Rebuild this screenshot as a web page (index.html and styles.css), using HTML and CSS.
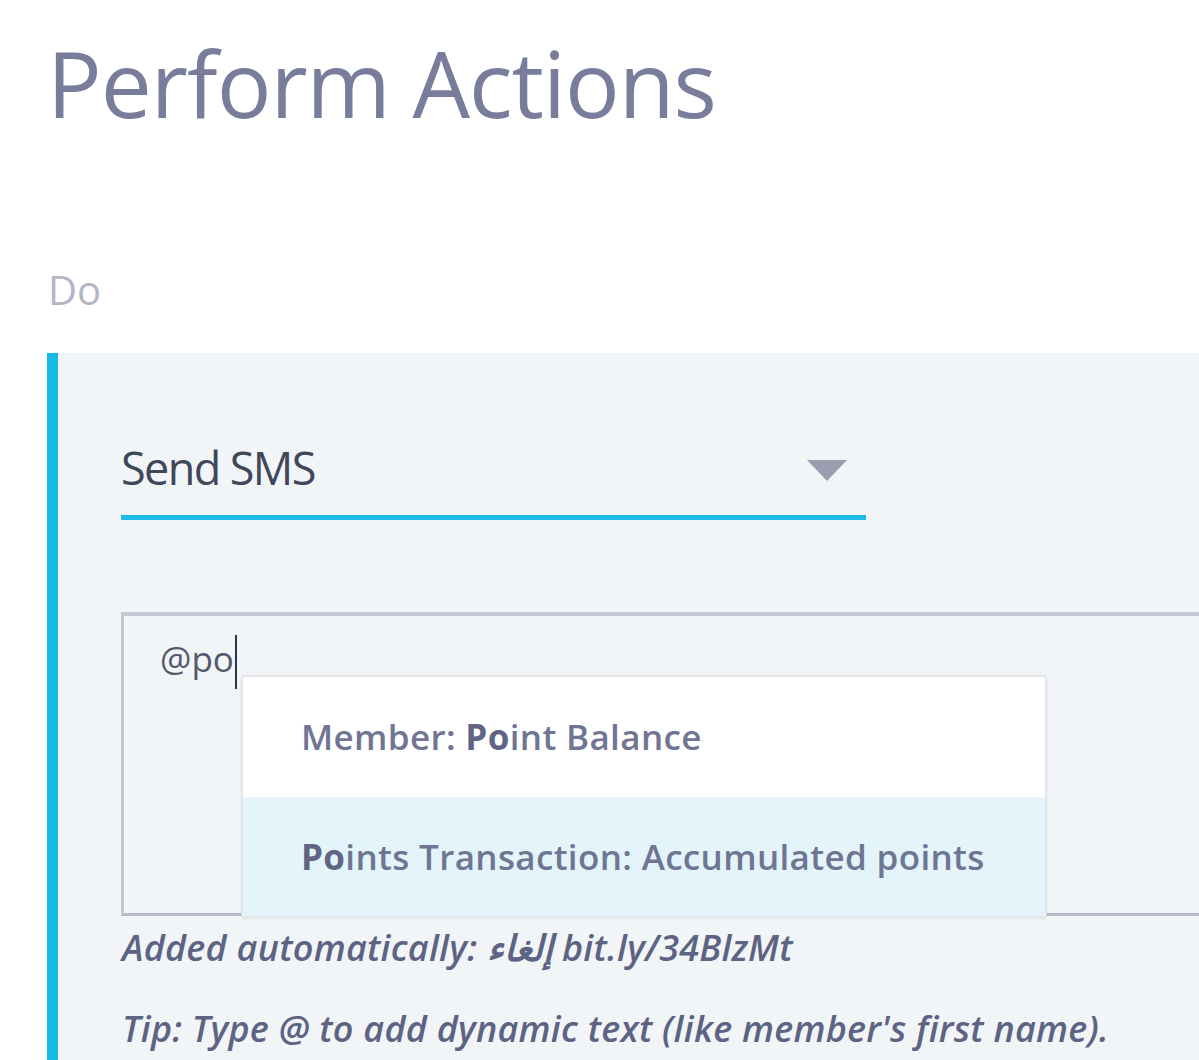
FILE: index.html
```html
<!DOCTYPE html>
<html lang="en">
<head>
<meta charset="utf-8">
<title>Perform Actions</title>
<link rel="stylesheet" href="styles.css">
</head>
<body>
<div class="page">
  <h1 class="title">Perform Actions</h1>
  <div class="label">Do</div>
  <section class="panel">
    <div class="select">
      <span class="select-value">Send SMS</span>
      <span class="select-arrow"></span>
    </div>
    <div class="editor">
      <div class="editor-text">@po<span class="caret"></span></div>
      <ul class="menu">
        <li class="menu-item">Member: <b>Po</b>int Balance</li>
        <li class="menu-item active"><b>Po</b>ints Transaction: Accumulated points</li>
      </ul>
    </div>
    <p class="note note-auto">Added automatically: إلغاء bit.ly/34BlzMt</p>
    <p class="note note-tip">Tip: Type @ to add dynamic text (like member's first name).</p>
  </section>
</div>
</body>
</html>
```

FILE: styles.css
```css
html, body {
  margin: 0;
  padding: 0;
  background: #ffffff;
  overflow: hidden;
}

body {
  font-family: "Open Sans", "DejaVu Sans", sans-serif;
  width: 1199px;
  height: 1060px;
  overflow: hidden;
}

.page {
  padding-left: 47px;
}

.title {
  margin: 28px 0 0 0;
  font-size: 91px;
  line-height: 110px;
  font-weight: 400;
  letter-spacing: -1px;
  color: #777d9a;
}

.label {
  margin-top: 127px;
  font-size: 40px;
  line-height: 50px;
  color: #b3b5c5;
  padding-left: 1px;
}

.panel {
  margin-top: 38px;
  border-left: 11px solid #17b9e6;
  background: #f1f5f8;
  padding: 85px 0 40px 63px;
  width: 1300px;
}

.select {
  width: 745px;
  display: flex;
  align-items: center;
  justify-content: space-between;
  height: 60px;
  padding-bottom: 17px;
  border-bottom: 5px solid #1bbde6;
}

.select-value {
  font-size: 45px;
  line-height: 60px;
  font-weight: 500;
  letter-spacing: -1.6px;
  color: #3f475a;
}

.select-arrow {
  width: 0;
  height: 0;
  border-left: 20px solid transparent;
  border-right: 20px solid transparent;
  border-top: 21px solid #9c9db1;
  margin-right: 19px;
  margin-top: 4px;
}

.editor {
  position: relative;
  margin-top: 92px;
  width: 1150px;
  height: 297px;
  border-top: 4px solid #c5c8d4;
  border-left: 3px solid #c5c8d4;
  border-bottom: 3px solid #b7bac9;
}

.editor-text {
  padding: 19px 0 0 36px;
  font-size: 35px;
  line-height: 48px;
  color: #545a6b;
}

.caret {
  display: inline-block;
  width: 2px;
  height: 54px;
  background: #2e3445;
  vertical-align: -17px;
  margin-left: 1px;
}

.menu {
  position: absolute;
  left: 117px;
  top: 59px;
  width: 802px;
  margin: 0;
  padding: 0;
  list-style: none;
  background: #ffffff;
  border: 2px solid #e3e5e9;
  border-radius: 3px;
  box-shadow: 0 1px 3px rgba(0, 0, 0, 0.06);
}

.menu-item {
  height: 120px;
  line-height: 120px;
  padding-left: 58px;
  font-size: 35px;
  font-weight: 600;
  letter-spacing: 0.35px;
  color: #6f7593;
}

.menu-item + .menu-item {
  height: 119px;
  line-height: 119px;
}

.menu-item b {
  font-weight: 700;
  color: #5f6583;
}

.menu-item.active {
  background: #e3f4fa;
}

.note {
  margin: 0;
  font-size: 36px;
  line-height: 44px;
  font-style: italic;
  font-weight: 600;
  letter-spacing: 0.25px;
  color: #5d6382;
  padding-left: 1px;
}

.note-auto {
  margin-top: 10px;
}

.note-tip {
  margin-top: 37px;
}
```
